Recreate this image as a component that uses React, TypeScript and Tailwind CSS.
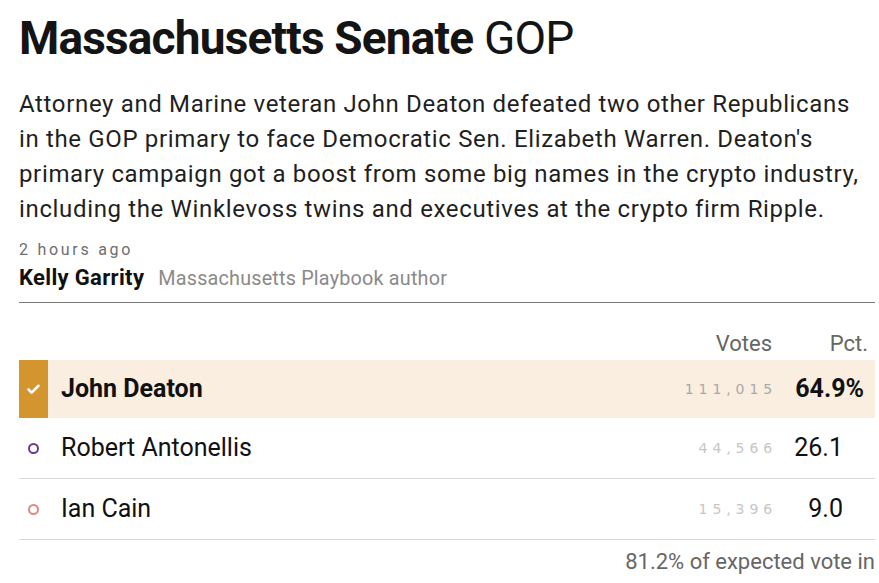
import { Check } from "lucide-react"

type Candidate = {
  name: string
  votes: string
  pct: string
  winner?: boolean
  dot?: string
}

const candidates: Candidate[] = [
  { name: "John Deaton", votes: "111,015", pct: "64.9", winner: true },
  { name: "Robert Antonellis", votes: "44,566", pct: "26.1", dot: "border-[#6b3a8c]" },
  { name: "Ian Cain", votes: "15,396", pct: "9.0", dot: "border-[#e3877f]" },
]

function ResultRow({ c }: { c: Candidate }) {
  return (
    <div
      className={`flex items-center ${
        c.winner ? "bg-[#f9eedf] h-[58px]" : "h-[61px] border-b border-[#d9d9d9]"
      }`}
    >
      <div className="w-[29px] h-full flex items-center justify-center">
        {c.winner ? (
          <div className="w-full h-full bg-[#d3952e] flex items-center justify-center">
            <Check className="w-[15px] h-[15px] text-white" strokeWidth={4} />
          </div>
        ) : (
          <div className={`w-[11px] h-[11px] rounded-full border-[2.5px] ${c.dot}`} />
        )}
      </div>
      <div
        className={`ml-[13px] flex-1 text-[25px] text-[#111] ${
          c.winner ? "font-bold" : "font-normal"
        }`}
      >
        {c.name}
      </div>
      <div
        className={`text-[14px] tracking-[0.35em] -mr-[5px] font-['DejaVu_Sans',sans-serif] text-right ${
          c.winner ? "text-[#a9a9a9]" : "text-[#c6c6c6]"
        }`}
      >
        {c.votes}
      </div>
      <div
        className={`w-[103px] text-right text-[25px] text-[#111] ${
          c.winner ? "font-bold pr-[11px]" : "pr-[32px]"
        }`}
      >
        {c.pct}
        {c.winner ? "%" : ""}
      </div>
    </div>
  )
}

export default function App() {
  return (
    <div className="bg-white w-[879px] h-[583px] pl-[19px] pr-[4px] pt-[9px] font-['Roboto',sans-serif] text-[#1a1a1a] overflow-hidden">
      <h1 className="text-[46px] leading-[58px] tracking-[-0.018em] text-[#141414]">
        <span className="font-bold">Massachusetts Senate</span>{" "}
        <span className="font-normal">GOP</span>
      </h1>
      <p className="mt-[20px] pr-[12px] text-[24px] leading-[35px] tracking-[0.027em] text-[#1f1f1f]">
        Attorney and Marine veteran John Deaton defeated two other Republicans in the GOP
        primary to face Democratic Sen. Elizabeth Warren. Deaton's primary campaign got a
        boost from some big names in the crypto industry, including the Winklevoss twins and
        executives at the crypto firm Ripple.
      </p>
      <div className="mt-[12px] text-[16px] leading-[22px] tracking-[0.17em] text-[#6e6e6e]">
        2 hours ago
      </div>
      <div className="mt-[4px] flex items-baseline gap-[14px] leading-[26px]">
        <span className="font-bold text-[22px] tracking-[0.015em] text-[#111]">Kelly Garrity</span>
        <span className="text-[#8a8a8a] text-[19.8px] tracking-[0.01em]">
          Massachusetts Playbook author
        </span>
      </div>
      <div className="mt-[10px] border-t border-[#7a7a7a]" />
      <div className="flex justify-end items-end h-[57px] text-[22px] text-[#666]">
        <div className="text-right">Votes</div>
        <div className="w-[103px] text-right pr-[7px]">Pct.</div>
      </div>
      <div>
        {candidates.map((c) => (
          <ResultRow key={c.name} c={c} />
        ))}
      </div>
      <div className="mt-[5px] text-right text-[22px] text-[#666]">81.2% of expected vote in</div>
    </div>
  )
}
